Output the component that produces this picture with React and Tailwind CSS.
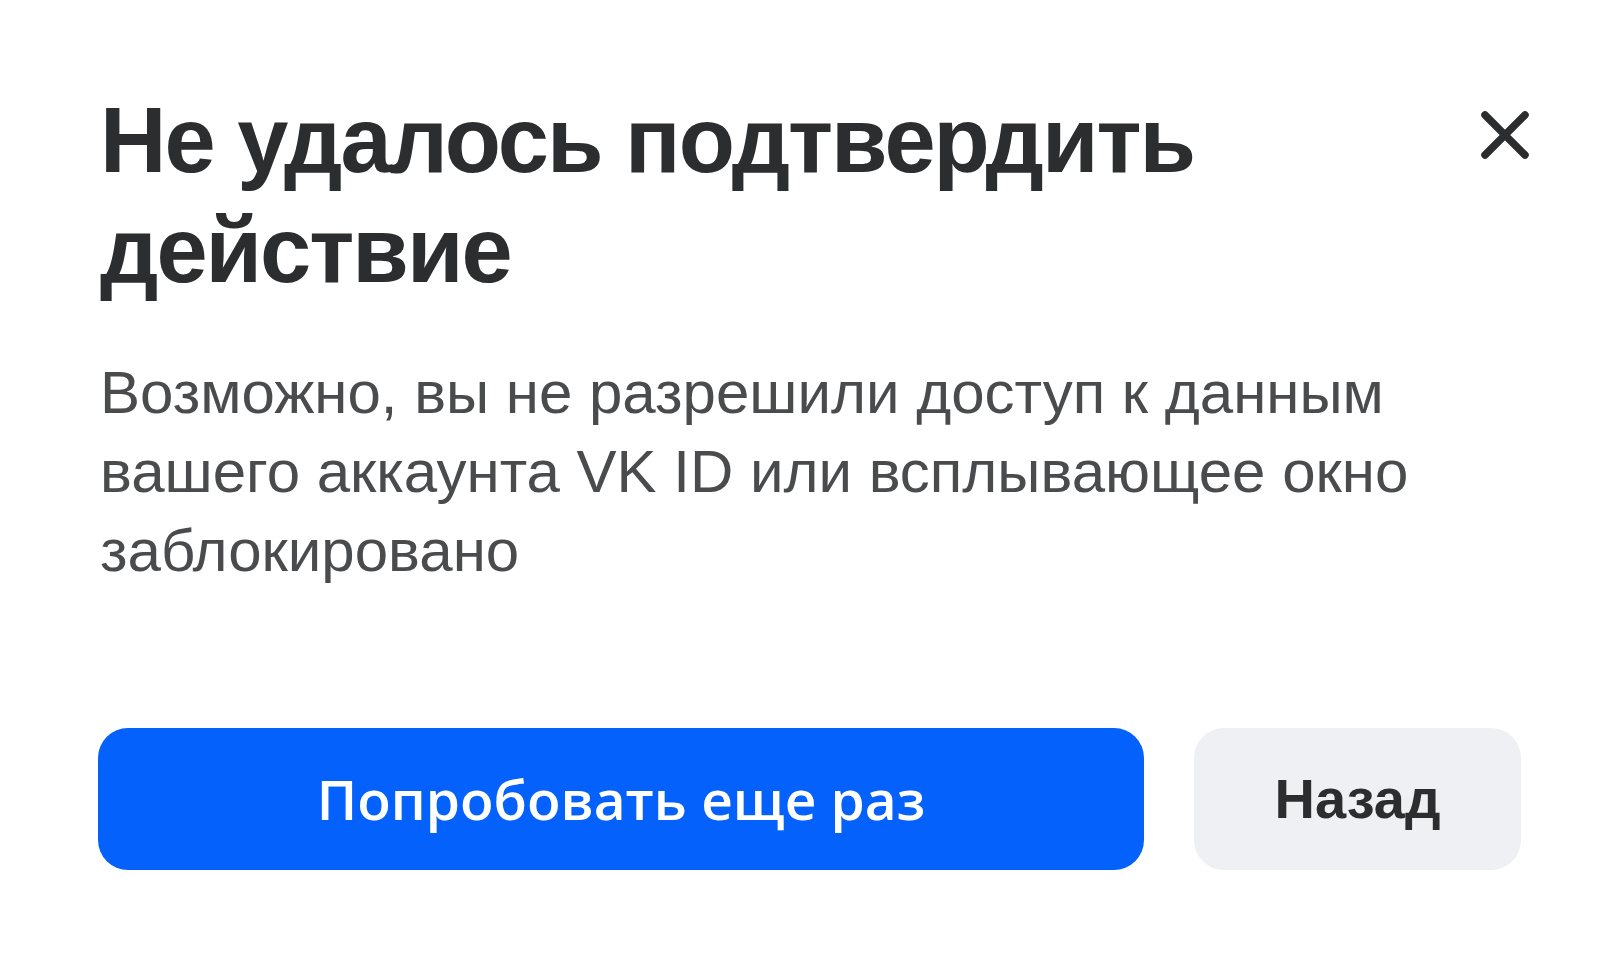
export default function App() {
  return (
    <div className="w-[1624px] h-[972px] bg-white overflow-hidden">
      <div className="pl-[100px] pt-[85px] pr-[94px]">
        <div className="flex items-start justify-between">
          <h1 className="font-['Liberation_Sans',Arial,sans-serif] font-bold text-[92px] leading-[110px] text-[#2c2d2e] tracking-[-2px]">
            Не удалось подтвердить
            <br />
            действие
          </h1>
          <button className="mt-[25px] w-[50px] h-[50px] flex items-center justify-center">
            <svg width="50" height="50" viewBox="0 0 50 50">
              <path d="M5 5 L45 45 M45 5 L5 45" stroke="#2c2d2e" strokeWidth="7.5" strokeLinecap="round" />
            </svg>
          </button>
        </div>
        <p className="mt-[48px] font-['Liberation_Sans',Arial,sans-serif] text-[60px] leading-[79px] text-[#4a4b4d]">
          Возможно, вы не разрешили доступ к данным
          <br />
          вашего аккаунта VK ID или всплывающее окно
          <br />
          заблокировано
        </p>
        <div className="mt-[138px] -ml-[2px] flex gap-[50px]">
          <button className="w-[1046px] h-[142px] rounded-[30px] bg-[#0561fb] text-white font-['Open_Sans',sans-serif] font-semibold text-[55px] flex items-center justify-center">
            Попробовать еще раз
          </button>
          <button className="w-[327px] h-[142px] rounded-[30px] bg-[#eef0f3] text-[#2c2d2e] font-['Liberation_Sans',Arial,sans-serif] font-bold text-[56px] flex items-center justify-center">
            Назад
          </button>
        </div>
      </div>
    </div>
  );
}
